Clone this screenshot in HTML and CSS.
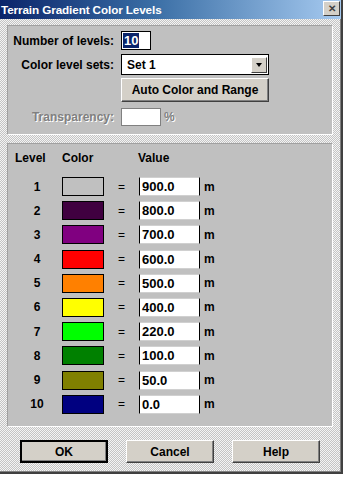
FILE: index.html
```html
<!DOCTYPE html>
<html lang="en">
<head>
    <meta charset="UTF-8">
    <meta name="viewport" content="width=device-width, initial-scale=1.0">
    <title>Terrain Gradient Color Levels</title>
    <link rel="stylesheet" href="styles.css">
</head>
<body>

    <div class="window">
        <div class="titlebar">
            <span class="title">Terrain Gradient Color Levels</span>
            <span class="close">&#x2715;</span>
        </div>

        <div class="client">
            <section class="panel settings">
                <div class="field">
                    <label class="label">Number of levels:</label>
                    <div class="edit count"><span class="selected">10</span></div>
                </div>
                <div class="field">
                    <label class="label">Color level sets:</label>
                    <div class="combo">
                        <span class="combo-text">Set 1</span>
                        <span class="combo-arrow"></span>
                    </div>
                </div>
                <div class="field">
                    <span class="label"></span>
                    <button class="btn auto">Auto Color and Range</button>
                </div>
                <div class="field disabled">
                    <label class="label">Transparency:</label>
                    <div class="edit transparency"></div>
                    <span class="unit">%</span>
                </div>
            </section>

            <section class="panel levels">
                <div class="levels-head">
                    <span class="head-level">Level</span>
                    <span class="head-color">Color</span>
                    <span class="head-value">Value</span>
                </div>
                <div class="levels-grid" id="levels"></div>
            </section>

            <div class="actions">
                <button class="btn default">OK</button>
                <button class="btn">Cancel</button>
                <button class="btn">Help</button>
            </div>
        </div>
    </div>

    <script>
        const levels = [
            ["#c0c0c0", "900.0"],
            ["#400040", "800.0"],
            ["#800080", "700.0"],
            ["#ff0000", "600.0"],
            ["#ff8000", "500.0"],
            ["#ffff00", "400.0"],
            ["#00ff00", "220.0"],
            ["#008000", "100.0"],
            ["#808000", "50.0"],
            ["#000080", "0.0"]
        ];

        const grid = document.getElementById("levels");
        levels.forEach(([color, value], i) => {
            grid.insertAdjacentHTML("beforeend",
                `<span class="num">${i + 1}</span>` +
                `<span class="swatch" style="background-color: ${color}"></span>` +
                `<span class="eq">=</span>` +
                `<span class="edit value">${value}</span>` +
                `<span class="unit">m</span>`);
        });
    </script>
</body>
</html>
```

FILE: styles.css
```css
html, body {
    margin: 0;
    height: 100%;
}

body {
    background-color: #ffffff;
    font-family: 'Liberation Sans', Arial, sans-serif;
    font-size: 12px;
    font-weight: bold;
    color: #000000;
}

.window {
    width: 341px;
    height: 472px;
    border-right: 2px solid #404040;
    border-bottom: 2px solid #404040;
    box-shadow: inset -1px -1px 0 #808080;
    background: repeating-conic-gradient(#c4c4c4 0 25%, #f4f4f4 0 50%) 0 0 / 2px 2px;
    display: flex;
    flex-direction: column;
}

.titlebar {
    height: 19px;
    display: flex;
    align-items: center;
    justify-content: space-between;
    background: linear-gradient(to right, #0a246a 0%, #3a6ea5 45%, #a6caf0 100%);
    color: #ffffff;
}

.title {
    font-size: 11.7px;
    padding-left: 1px;
    white-space: nowrap;
    letter-spacing: -0.1px;
}

.close {
    width: 15px;
    height: 13px;
    margin-right: 1px;
    margin-top: -2px;
    background-color: #d4d0c8;
    border: 1px solid;
    border-color: #ffffff #404040 #404040 #ffffff;
    color: #404040;
    font-size: 10px;
    line-height: 13px;
    text-align: center;
}

.client {
    padding: 6px 0 0 7px;
}

.panel {
    width: 324px;
    background-color: #c0c0c0;
    border: 1px solid;
    border-color: #a0a0a0 #ffffff #ffffff #a0a0a0;
}

/* top panel */

.settings {
    box-sizing: content-box;
    height: 103px;
    padding-top: 5px;
}

.field {
    display: flex;
    align-items: center;
}

.field:nth-child(2) {
    margin-top: 4px;
}

.field:nth-child(3) {
    margin-top: 3px;
}

.field:nth-child(4) {
    margin-top: 6px;
}

.label {
    width: 106px;
    margin-right: 7px;
    text-align: right;
    white-space: nowrap;
}

.edit {
    box-sizing: border-box;
    background-color: #ffffff;
    border: 1px solid #000000;
}

.count {
    width: 30px;
    height: 19px;
    padding: 1px 0 0 1px;
    font-size: 13px;
}

.selected {
    background-color: #0a246a;
    color: #ffffff;
    padding: 0 1px;
}

.combo {
    box-sizing: border-box;
    width: 148px;
    height: 21px;
    display: flex;
    align-items: center;
    justify-content: space-between;
    background-color: #ffffff;
    border: 1px solid #000000;
    padding: 0 1px 0 5px;
}

.combo-arrow {
    box-sizing: border-box;
    width: 16px;
    height: 16px;
    background-color: #d4d0c8;
    border: 1px solid;
    border-color: #ffffff #404040 #404040 #ffffff;
    position: relative;
}

.combo-arrow::after {
    content: "";
    position: absolute;
    left: 4px;
    top: 5px;
    border-left: 3px solid transparent;
    border-right: 3px solid transparent;
    border-top: 4px solid #000000;
}

.btn {
    box-sizing: border-box;
    font-family: inherit;
    font-size: 12px;
    font-weight: bold;
    color: #000000;
    background-color: #d4d0c8;
    border: 1px solid;
    border-color: #ffffff #404040 #404040 #ffffff;
    box-shadow: inset -1px -1px 0 #808080;
    padding: 0;
}

.auto {
    width: 148px;
    height: 24px;
}

.transparency {
    width: 40px;
    height: 18px;
    border-color: #808080;
}

.disabled .label,
.disabled .unit {
    color: #808080;
    text-shadow: 1px 1px 0 #ffffff;
}

.disabled .unit {
    margin-left: 3px;
}

/* levels panel */

.levels {
    margin-top: 8px;
    height: 275px;
    padding-top: 7px;
}

.levels-head {
    display: flex;
    height: 14px;
    padding-left: 7px;
    margin-bottom: 12px;
}

.head-level {
    width: 47px;
}

.head-color {
    width: 76px;
}

.levels-grid {
    display: grid;
    grid-template-columns: 47px 42px 35px 61px auto;
    grid-auto-rows: 19px;
    row-gap: 5.2px;
    align-items: center;
    padding-left: 7px;
}

.num {
    text-align: center;
    padding-right: 3px;
}

.swatch {
    height: 19px;
    box-sizing: border-box;
    border: 1px solid #000000;
}

.eq {
    text-align: center;
    font-weight: normal;
}

.value {
    height: 19px;
    font-size: 13px;
    line-height: 17px;
    padding-left: 2px;
    border-color: #d0d0d0 #000000 #d0d0d0 #000000;
}

.levels-grid .unit {
    padding-left: 4px;
}

/* buttons */

.actions {
    display: flex;
    gap: 18px;
    padding: 13px 0 0 13px;
}

.actions .btn {
    width: 88px;
    height: 23px;
}

.default {
    border: 2px solid #000000;
}
```
